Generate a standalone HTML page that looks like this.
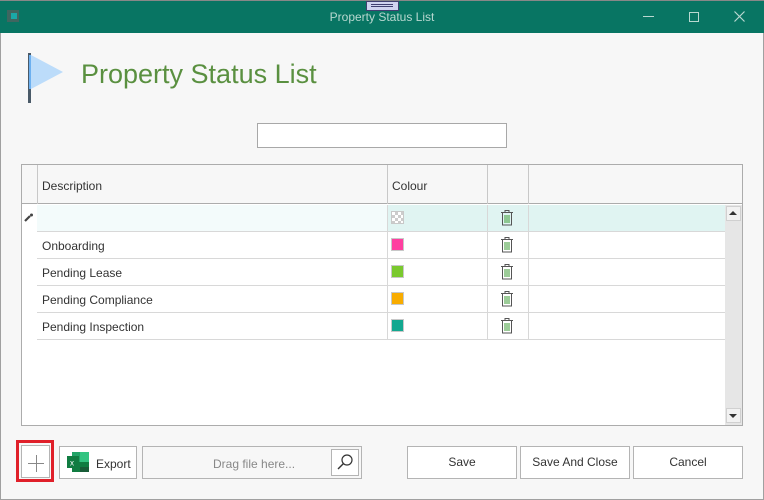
<!DOCTYPE html>
<html><head><meta charset="utf-8"><style>
*{margin:0;padding:0;box-sizing:border-box}
body{width:764px;height:500px;overflow:hidden;background:#f7f7f7;font-family:"Liberation Sans",sans-serif;font-size:12px;color:#333;position:relative}
.a{position:absolute}
.win{left:0;top:0;width:764px;height:500px;border:1px solid #a0a0a0}
.tb{left:0;top:0;width:764px;height:33px;background:#087563;border-top:1px solid #888}
.btn{position:absolute;background:#fff;border:1px solid #b4b4b4;text-align:center;font-size:12px;color:#333}
.row{position:absolute;left:37px;width:688px;height:27px;border-bottom:1px solid #d8d8d8;background:#fff}
.row .t{position:absolute;left:5px;top:7px}
.row .c1{position:absolute;left:350px;top:0;width:1px;height:27px;background:#d8d8d8}
.row .c2{position:absolute;left:450px;top:0;width:1px;height:27px;background:#d8d8d8}
.row .c3{position:absolute;left:491px;top:0;width:1px;height:27px;background:#d8d8d8}
.sw{position:absolute;left:354px;top:6px;width:13px;height:13px;border:1px solid #c8c8c8}
.tr{position:absolute;left:463px;top:4px}
</style></head><body>
<div class="a win"></div>
<div class="a tb"></div>
<div class="a" style="left:7px;top:10px;width:12px;height:12px;background:#3f6660"></div>
<div class="a" style="left:11px;top:13px;width:6px;height:6px;background:#1aa8a8"></div>
<div class="a" style="left:366px;top:1px;width:33px;height:10px;background:#d0d4f0;border:1px solid #404070"></div>
<div class="a" style="left:371px;top:4px;width:22px;height:1px;background:#404070"></div>
<div class="a" style="left:371px;top:6px;width:22px;height:1px;background:#404070"></div>
<div class="a" style="left:0;top:10px;width:764px;text-align:center;color:#b8d8d0;font-size:12px">Property Status List</div>
<div class="a" style="left:643px;top:16px;width:11px;height:1px;background:#b8d8d0"></div>
<div class="a" style="left:689px;top:12px;width:10px;height:10px;border:1px solid #b8d8d0"></div>
<svg class="a" style="left:734px;top:11px" width="11" height="11"><path d="M0.5 0.5L10.5 10.5M10.5 0.5L0.5 10.5" stroke="#b8d8d0" stroke-width="1.2"/></svg>
<div class="a" style="left:28px;top:53px;width:3px;height:50px;background:#4a5a68"></div>
<div class="a" style="left:29px;top:55px;width:2px;height:34px;background:#6cb0f0"></div>
<svg class="a" style="left:31px;top:55px" width="34" height="34"><path d="M0 0L32 17L0 34Z" fill="#bcdcfa"/></svg>
<div class="a" style="left:81px;top:59px;font-size:27px;color:#5a9040">Property Status List</div>
<div class="a" style="left:257px;top:123px;width:250px;height:25px;background:#fff;border:1px solid #a8a8a8"></div>
<div class="a" style="left:21px;top:164px;width:722px;height:262px;border:1px solid #acacac;background:#fff"></div>
<div class="a" style="left:22px;top:165px;width:720px;height:39px;background:#f7f7f7;border-bottom:1px solid #acacac"></div>
<div class="a" style="left:37px;top:165px;width:1px;height:39px;background:#c8c8c8"></div>
<div class="a" style="left:387px;top:165px;width:1px;height:39px;background:#c8c8c8"></div>
<div class="a" style="left:487px;top:165px;width:1px;height:39px;background:#c8c8c8"></div>
<div class="a" style="left:528px;top:165px;width:1px;height:39px;background:#c8c8c8"></div>
<div class="a" style="left:42px;top:179px">Description</div>
<div class="a" style="left:392px;top:179px">Colour</div>
<div class="a" style="left:37px;top:205px;width:1px;height:135px;background:#d8d8d8"></div>
<svg class="a" style="left:24px;top:213px" width="10" height="10"><path d="M1 8L6 3" stroke="#444" stroke-width="2.2"/><circle cx="7.5" cy="2" r="1.5" fill="#444"/></svg>
<div class="row" style="top:205px;background:#f3fbfb"><div class="a" style="left:351px;top:0;width:337px;height:26px;background:#e0f4f2"></div><div class="c1"></div><div class="c2"></div><div class="c3"></div>
<div class="sw" style="background:repeating-conic-gradient(#ccc 0 25%,#fff 0 50%) 0 0/6px 6px"></div><div class="tr"></div></div>
<div class="row" style="top:232px"><div class="t">Onboarding</div><div class="c1"></div><div class="c2"></div><div class="c3"></div><div class="sw" style="background:#ff3fa0"></div><div class="tr"></div></div>
<div class="row" style="top:259px"><div class="t">Pending Lease</div><div class="c1"></div><div class="c2"></div><div class="c3"></div><div class="sw" style="background:#7ac92e"></div><div class="tr"></div></div>
<div class="row" style="top:286px"><div class="t">Pending Compliance</div><div class="c1"></div><div class="c2"></div><div class="c3"></div><div class="sw" style="background:#f8ac00"></div><div class="tr"></div></div>
<div class="row" style="top:313px"><div class="t">Pending Inspection</div><div class="c1"></div><div class="c2"></div><div class="c3"></div><div class="sw" style="background:#12a890"></div><div class="tr"></div></div>
<div class="a" style="left:725px;top:205px;width:17px;height:220px;background:#e6e6e6"></div>
<div class="a" style="left:726px;top:206px;width:15px;height:15px;background:#f2f2f2;border:1px solid #d0d0d0"></div>
<svg class="a" style="left:729px;top:210px" width="8" height="6"><path d="M0 5L4 1L8 5Z" fill="#333"/></svg>
<div class="a" style="left:726px;top:408px;width:15px;height:15px;background:#f2f2f2;border:1px solid #d0d0d0"></div>
<svg class="a" style="left:729px;top:413px" width="8" height="6"><path d="M0 1L8 1L4 5Z" fill="#333"/></svg>
<div class="a" style="left:16px;top:440px;width:38px;height:42px;border:3px solid #e0202a"></div>
<div class="btn" style="left:21px;top:445px;width:29px;height:33px"></div>
<div class="a" style="left:28px;top:463px;width:16px;height:1px;background:#888"></div>
<div class="a" style="left:35.5px;top:455px;width:1px;height:17px;background:#888"></div>
<div class="btn" style="left:59px;top:446px;width:78px;height:33px"></div>
<svg class="a" style="left:67px;top:452px" width="22" height="20"><rect x="5" y="0" width="17" height="20" fill="#21a366"/><rect x="13" y="0" width="9" height="10" fill="#33c481"/><rect x="5" y="10" width="17" height="10" fill="#107c41"/><rect x="13" y="15" width="9" height="5" fill="#185c37"/><rect x="0" y="4" width="12" height="12" fill="#107c41"/><text x="3" y="13.5" font-size="8" fill="#fff" font-family="Liberation Sans">x</text></svg>
<div class="a" style="left:96px;top:457px">Export</div>
<div class="btn" style="left:142px;top:446px;width:220px;height:33px;background:#f7f7f7"></div>
<div class="a" style="left:213px;top:457px;color:#888">Drag file here...</div>
<div class="btn" style="left:331px;top:449px;width:28px;height:27px"></div>
<svg class="a" style="left:336px;top:453px" width="18" height="18"><circle cx="11" cy="7" r="5" fill="none" stroke="#333" stroke-width="1.2"/><path d="M7.5 10.5L2 16" stroke="#333" stroke-width="1.4"/></svg>
<div class="btn" style="left:407px;top:446px;width:110px;height:33px;line-height:31px">Save</div>
<div class="btn" style="left:520px;top:446px;width:110px;height:33px;line-height:31px">Save And Close</div>
<div class="btn" style="left:633px;top:446px;width:110px;height:33px;line-height:31px">Cancel</div>
<script>
document.querySelectorAll('.tr').forEach(function(e){e.innerHTML='<svg width="14" height="17"><path d="M1 3.5H13M5 3.5V1.5H9V3.5" fill="none" stroke="#555" stroke-width="1"/><path d="M2.5 4V16H11.5V4" fill="none" stroke="#555" stroke-width="1"/><path d="M5 6V14M7 6V14M9 6V14" stroke="#3a9a30" stroke-width="1"/></svg>';});
</script>
</body></html>
